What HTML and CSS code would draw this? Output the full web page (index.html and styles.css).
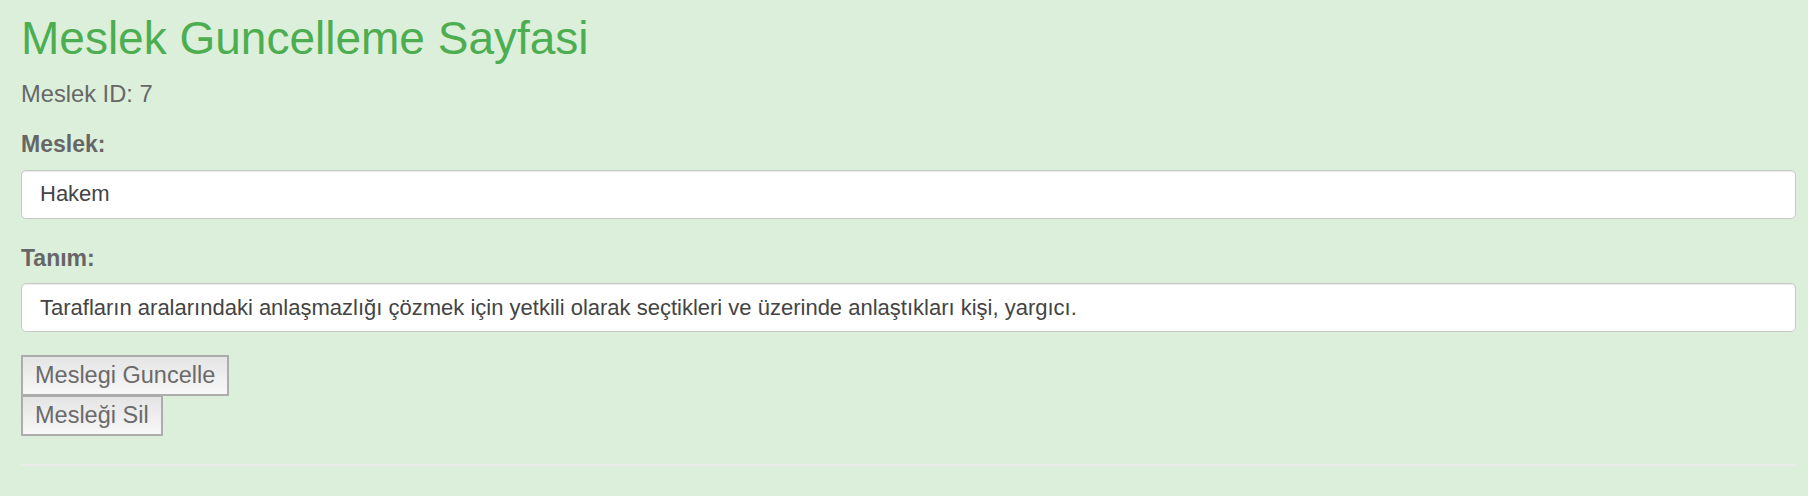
FILE: index.html
```html
<!DOCTYPE html>
<html lang="tr">
<head>
<meta charset="utf-8">
<title>Meslek Guncelleme Sayfasi</title>
<link rel="stylesheet" href="styles.css">
</head>
<body class="page">
<main class="container">
  <h1 class="title">Meslek Guncelleme Sayfasi</h1>
  <p class="meta">Meslek ID: 7</p>
  <form class="form">
    <div class="field">
      <label class="label" for="meslek">Meslek:</label>
      <input class="control" id="meslek" type="text" value="Hakem">
    </div>
    <div class="field field-second">
      <label class="label" for="tanim">Tanım:</label>
      <input class="control" id="tanim" type="text" value="Tarafların aralarındaki anlaşmazlığı çözmek için yetkili olarak seçtikleri ve üzerinde anlaştıkları kişi, yargıcı.">
    </div>
    <div class="actions">
      <button class="btn" type="button">Meslegi Guncelle</button>
      <button class="btn btn-stacked" type="button">Mesleği Sil</button>
    </div>
  </form>
  <hr class="rule">
</main>
</body>
</html>
```

FILE: styles.css
```css
html, body {
  margin: 0;
  padding: 0;
}

.page {
  background: #dcefdb;
  font-family: "Liberation Sans", Arial, Helvetica, sans-serif;
  color: #676767;
  width: 1808px;
  height: 496px;
  overflow: hidden;
}

.container {
  display: flex;
  flex-direction: column;
  padding: 13px 12px 0 21px;
}

.title {
  margin: 0;
  font-size: 46px;
  line-height: 50px;
  font-weight: normal;
  color: #4cae50;
}

.meta {
  margin: 18px 0 0;
  font-size: 23.7px;
  line-height: 26px;
}

.form {
  display: flex;
  flex-direction: column;
  margin: 0;
}

.field {
  display: flex;
  flex-direction: column;
  margin-top: 24px;
}

.field-second {
  margin-top: 26px;
}

.label {
  font-size: 23px;
  line-height: 26px;
  font-weight: bold;
  color: #666666;
}

.control {
  box-sizing: border-box;
  margin-top: 12.5px;
  height: 49px;
  width: 100%;
  padding: 0 18px;
  border: 1px solid #c8c8c8;
  border-radius: 5px;
  background: #ffffff;
  box-shadow: inset 0 1px 1px rgba(0, 0, 0, 0.08);
  font-family: "Liberation Sans", Arial, Helvetica, sans-serif;
  font-size: 22px;
  color: #444444;
  outline: none;
}

.actions {
  display: flex;
  flex-direction: column;
  align-items: flex-start;
  margin-top: 23px;
}

.btn {
  box-sizing: border-box;
  height: 41px;
  margin: 0;
  padding: 0 12px;
  border: 2px solid #acacac;
  border-radius: 0;
  background: linear-gradient(#e5e5e5, #f7f7f7);
  font-family: "Liberation Sans", Arial, Helvetica, sans-serif;
  font-size: 23.5px;
  line-height: 37px;
  color: #6a6a6a;
}

.btn-stacked {
  margin-top: -1px;
}

.rule {
  margin: 28px 0 0;
  height: 0;
  border: 0;
  border-top: 2px solid #e9ece8;
}
```
